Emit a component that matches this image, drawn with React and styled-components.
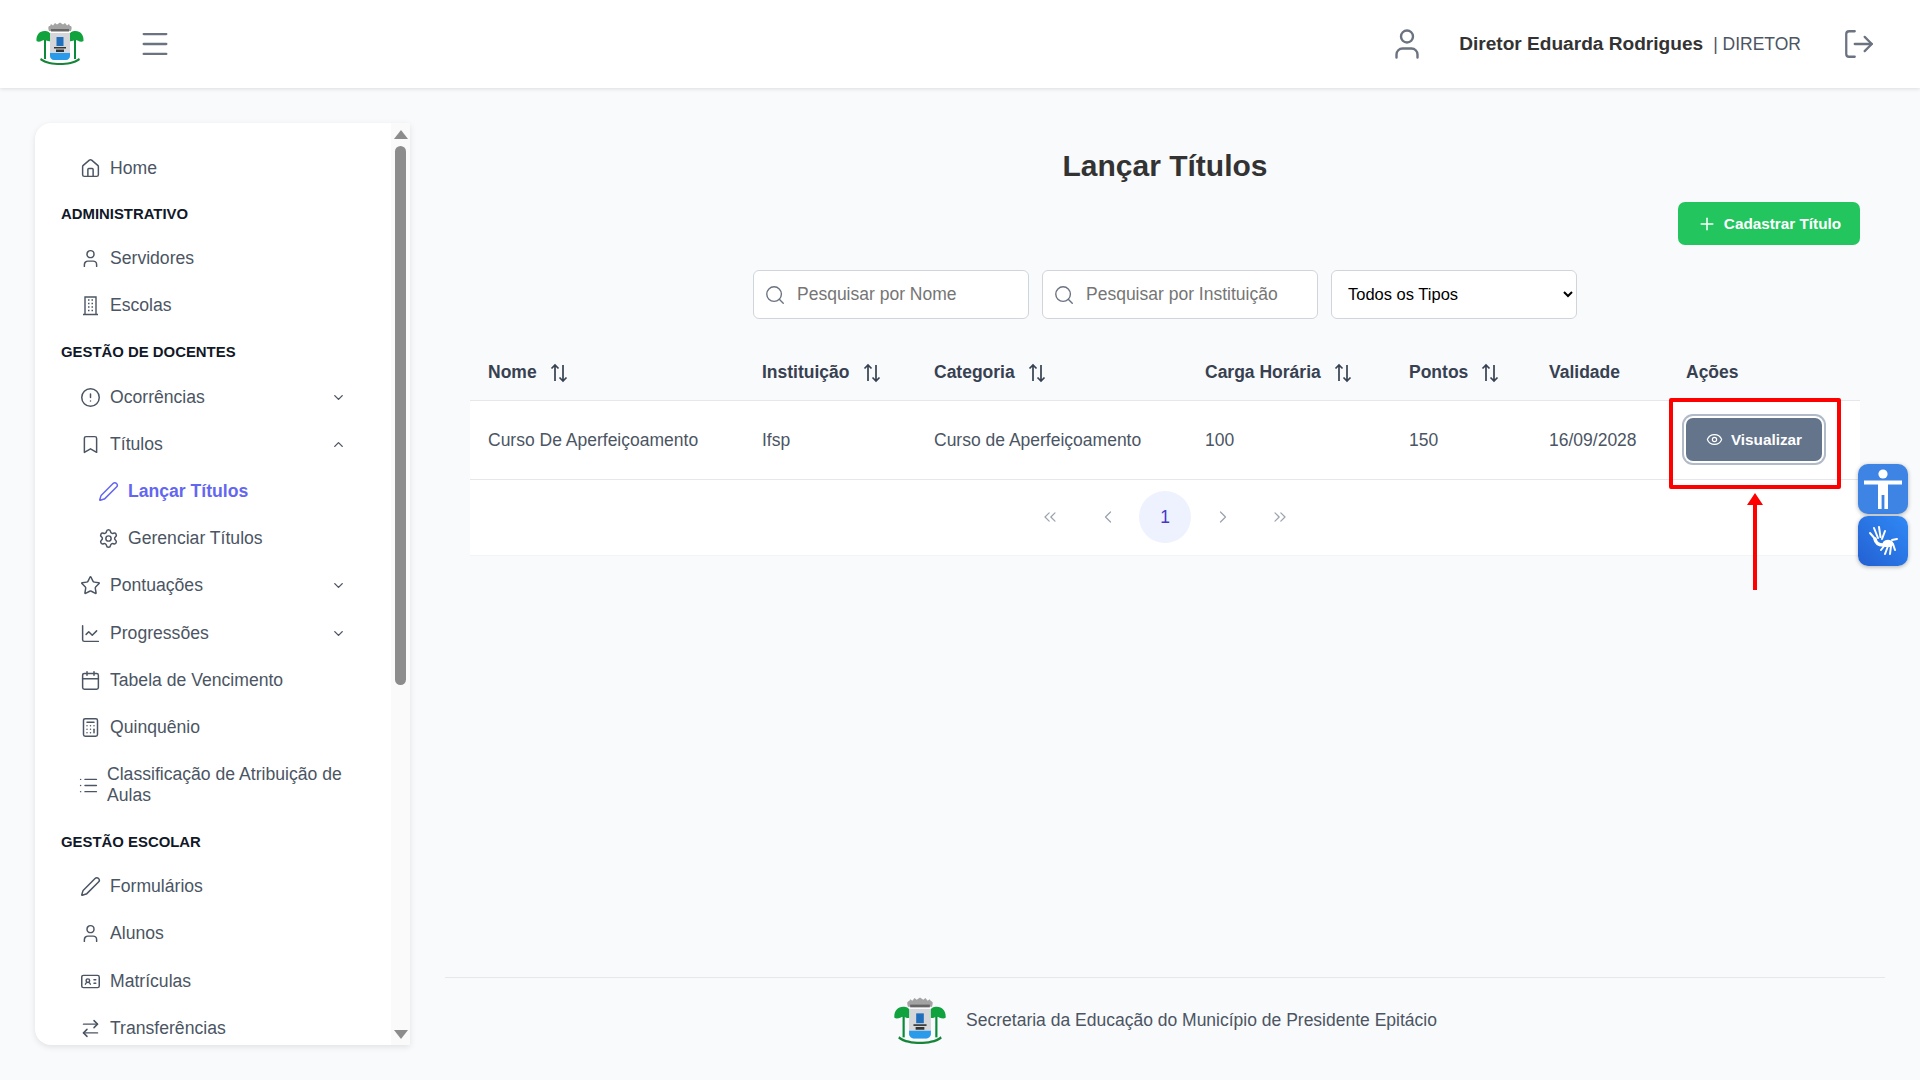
import React from 'react';
import styled, { createGlobalStyle } from 'styled-components';
import {
    House,
    User,
    CircleAlert,
    Bookmark,
    ChevronDown,
    ChevronUp,
    Pen,
    Settings,
    Star,
    ChartLine,
    Calendar,
    Calculator,
    List,
    IdCard,
    ArrowRightLeft,
    Menu,
    LogOut,
    Search,
    Plus,
    Eye,
    ChevronsLeft,
    ChevronsRight,
    ChevronLeft,
    ChevronRight,
} from 'lucide-react';

const GlobalStyle = createGlobalStyle`
    html, body {
        margin: 0;
        padding: 0;
        background: #f9fafb;
        font-family: "Liberation Sans", Arial, sans-serif;
    }
    * {
        box-sizing: border-box;
    }
`;

const Page = styled.div`
    position: relative;
    width: 1920px;
    height: 1080px;
    overflow: hidden;
    display: flex;
    flex-direction: column;
    background: #f9fafb;
`;

const Header = styled.header`
    height: 88px;
    flex: none;
    display: flex;
    align-items: center;
    background: #fff;
    box-shadow: 0 1px 4px rgba(0, 0, 0, 0.12);
    padding: 0 44px 0 36px;
    z-index: 2;
`;

const HamburgerBtn = styled.div`
    display: flex;
    margin-left: 54px;
    color: #6b7280;
`;

const HeaderRight = styled.div`
    margin-left: auto;
    display: flex;
    align-items: center;
    color: #6b7280;
`;

const UserName = styled.span`
    margin-left: 34px;
    font-size: 19.1px;
    font-weight: 700;
    color: #333;
`;

const UserRole = styled.span`
    margin-left: 10px;
    margin-right: 41px;
    font-size: 17.5px;
    color: #4b5563;
`;

const Body = styled.div`
    flex: 1;
    display: flex;
    min-height: 0;
`;

const Sidebar = styled.aside`
    flex: none;
    width: 375px;
    margin: 35px 0 35px 35px;
    display: flex;
    background: #fff;
    border-radius: 16px 0 0 16px;
    box-shadow: 0 2px 6px rgba(0, 0, 0, 0.1);
    overflow: hidden;
`;

const Nav = styled.nav`
    flex: 1;
    min-width: 0;
    overflow: hidden;
    padding-top: 22px;
`;

const ScrollTrack = styled.div`
    flex: none;
    width: 19px;
    display: flex;
    flex-direction: column;
    align-items: center;
    background: #fafafa;
    padding-top: 7px;
`;

const ScrollArrow = styled.div`
    width: 0;
    height: 0;
    border-left: 7px solid transparent;
    border-right: 7px solid transparent;
    ${props => (props.$down ? 'border-top: 9px solid #8c8c8c;' : 'border-bottom: 9px solid #8c8c8c;')}
    ${props => (props.$down ? 'margin-top: auto; margin-bottom: 6px;' : '')}
`;

const ScrollThumb = styled.div`
    width: 11px;
    height: 539px;
    margin-top: 7px;
    background: #8c8c8c;
    border-radius: 6px;
`;

const SectionTitle = styled.div`
    height: ${props => (props.$first ? '43px' : '44px')};
    display: flex;
    align-items: center;
    padding: ${props => (props.$first ? '0' : '1px')} 0 0 26px;
    font-size: 14.9px;
    font-weight: 700;
    color: #111827;
`;

const NavItem = styled.div`
    min-height: 47.2px;
    display: flex;
    align-items: center;
    gap: ${props => (props.$tight ? '8px' : '9px')};
    padding: 13px 45px 13px ${props => (props.$sub ? '63px' : props.$tight ? '43px' : '45px')};
    font-size: 17.6px;
    line-height: 21px;
    color: ${props => (props.$active ? '#6366f1' : '#4b5563')};
    font-weight: ${props => (props.$active ? 700 : 400)};
    svg {
        flex: none;
    }
`;

const NavLabel = styled.span`
    flex: 1;
`;

const Main = styled.main`
    flex: 1;
    min-width: 0;
    display: flex;
    flex-direction: column;
    padding: 60px 35px 0;
`;

const Content = styled.div`
    flex: 1;
    padding: 0 25px;
`;

const Title = styled.h1`
    margin: 0;
    height: 36px;
    line-height: 36px;
    text-align: center;
    font-size: 30px;
    font-weight: 700;
    color: #333;
`;

const TopActions = styled.div`
    display: flex;
    justify-content: flex-end;
    margin-top: 18px;
`;

const AddButton = styled.button`
    width: 182px;
    height: 43px;
    display: flex;
    align-items: center;
    justify-content: center;
    gap: 7px;
    border: 0;
    border-radius: 7px;
    background: #22c55e;
    color: #fff;
    font-family: inherit;
    font-size: 15.3px;
    font-weight: 700;
`;

const Filters = styled.div`
    display: flex;
    justify-content: center;
    gap: 13px;
    margin-top: 25px;
`;

const SearchBox = styled.label`
    width: 276px;
    height: 49px;
    display: flex;
    align-items: center;
    gap: 11px;
    padding: 0 10px;
    background: #fff;
    border: 1px solid #d1d5db;
    border-radius: 6px;
    color: #6b7280;
`;

const SearchInput = styled.input`
    flex: 1;
    min-width: 0;
    border: 0;
    outline: 0;
    padding: 0;
    background: transparent;
    font-family: inherit;
    font-size: 17.5px;
    color: #333;
    ::placeholder {
        color: #757575;
    }
`;

const TypeSelect = styled.select`
    width: 246px;
    height: 49px;
    padding: 0 12px 2px;
    background: #fff;
    border: 1px solid #d1d5db;
    border-radius: 6px;
    font-family: inherit;
    font-size: 16.5px;
    color: #000;
`;

const Table = styled.table`
    width: 100%;
    margin-top: 25px;
    table-layout: fixed;
    border-collapse: collapse;
`;

const Th = styled.th`
    width: ${props => props.$w}px;
    height: 56px;
    padding: 2px 18px 0;
    text-align: left;
    font-size: 17.5px;
    font-weight: 700;
    color: #374151;
    border-bottom: 1px solid #e5e7eb;
`;

const ThInner = styled.span`
    display: inline-flex;
    align-items: center;
    gap: 13px;
`;

const Td = styled.td`
    height: 79px;
    padding: 2px 18px 0;
    background: #fff;
    font-size: 17.5px;
    color: #4b5563;
    border-bottom: 1px solid #e5e7eb;
`;

const ViewButton = styled.button`
    width: 136px;
    height: 43px;
    margin-top: -2px;
    display: flex;
    align-items: center;
    justify-content: center;
    gap: 8px;
    border: 0;
    border-radius: 7px;
    background: #64748b;
    color: #fff;
    box-shadow: 0 0 0 2px #fff, 0 0 0 4px #b0bac8;
    font-family: inherit;
    font-size: 15.3px;
    font-weight: 700;
`;

const Pagination = styled.div`
    height: 76px;
    display: flex;
    align-items: center;
    justify-content: center;
    gap: 5.5px;
    background: #fff;
    border-bottom: 1px solid #f3f4f6;
`;

const PageButton = styled.div`
    width: 52px;
    height: 52px;
    display: flex;
    align-items: center;
    justify-content: center;
    border-radius: 50%;
    font-size: 17.5px;
    color: ${props => (props.$current ? '#4338ca' : '#9ca3af')};
    background: ${props => (props.$current ? '#eef2ff' : 'transparent')};
`;

const Footer = styled.footer`
    height: 103px;
    flex: none;
    display: flex;
    align-items: flex-start;
    justify-content: center;
    gap: 19px;
    padding-top: 19px;
    border-top: 1px solid #e5e7eb;
    font-size: 17.5px;
    color: #4b5563;
`;

const FooterText = styled.span`
    line-height: 46px;
`;

const Highlight = styled.div`
    position: absolute;
    left: 1669px;
    top: 398px;
    width: 172px;
    height: 91px;
    border: 4px solid #f00;
    border-radius: 2px;
`;

const ArrowMark = styled.svg`
    position: absolute;
    left: 1745px;
    top: 493px;
`;

const WidgetStack = styled.div`
    position: absolute;
    left: 1858px;
    top: 464px;
    display: flex;
    flex-direction: column;
    gap: 2px;
`;

const Widget = styled.div`
    width: 50px;
    height: 50px;
    display: flex;
    align-items: center;
    justify-content: center;
    border-radius: 10px;
    background: ${props => (props.$hands ? 'linear-gradient(225deg, #3089f6, #2360d2)' : '#3d84e4')};
    box-shadow: 0 1px 4px rgba(0, 0, 0, 0.3);
`;

const Crest = ({ w, h }) => (
    <svg width={w} height={h} viewBox="0 0 48 44">
        <rect x="8" y="15" width="2" height="22" fill="#0a8a3a" />
        <rect x="38" y="15" width="2" height="22" fill="#0a8a3a" />
        <path d="M0.5 19c-.5-6 3-10 8-10 3 0 6 1 6.5 5l-.5 5c-2 1-4-1-6-1s-5 3-8 1z" fill="#10a23c" />
        <path d="M47.5 19c.5-6-3-10-8-10-3 0-6 1-6.5 5l.5 5c2 1 4-1 6-1s5 3 8 1z" fill="#10a23c" />
        <path d="M13 9c-1-3-1-5 1-5l1-2 2 1.5 2-2.500 2 1.500 3-2 3 2 2-1.500 2 2.500 2-1.500 1 2c2 0 2 2 1 5z" fill="#a3a3a3" />
        <rect x="15" y="7" width="18" height="2.5" fill="#666" />
        <path d="M14 11h20v23c0 2-2 4-4 4H18c-2 0-4-2-4-4z" fill="#d4d6da" />
        <rect x="20.5" y="15" width="7" height="9" fill="#1f6fbd" />
        <rect x="18" y="25" width="12" height="1.5" fill="#333" />
        <rect x="20" y="27.5" width="8" height="2.5" fill="#333" />
        <path d="M14 31h20v3c0 2-2 4-4 4H18c-2 0-4-2-4-4z" fill="#2a9bea" />
        <path d="M5 36c5 4 12 5 19 5s14-1 19-5l1 2c-5 4-13 5-20 5S9 42 4 38z" fill="#16853a" />
    </svg>
);

const BuildingIcon = ({ size }) => (
    <svg width={size} height={size} viewBox="0 0 21 21" fill="none" stroke="currentColor" strokeWidth="1.4">
        <path d="M3 19.5h15M5 19.5V2h11v17.500" />
        <path
            d="M8 5h1.500M11.500 5H13M8 8.500h1.500M11.500 8.500H13M8 12h1.500M11.500 12H13M8 15.500h1.500M11.500 15.500H13"
            strokeWidth="1.6"
        />
    </svg>
);

const SortIcon = () => (
    <svg width="18" height="20" viewBox="0 0 18 20" fill="none" stroke="#374151" strokeWidth="1.7">
        <path d="M5 18V2M1.5 5.5 5 2l3.5 3.5" />
        <path d="M13 2v16M9.5 14.5 13 18l3.5-3.5" />
    </svg>
);

const BodyIcon = () => (
    <svg width="40" height="42" viewBox="0 0 40 42" fill="#fff">
        <circle cx="20" cy="6" r="4.6" />
        <path d="M1 12.5h38v4H25V41h-3.6V27h-2.8v14H15V16.5H1z" />
    </svg>
);

const HandsIcon = () => (
    <svg width="32" height="32" viewBox="0 0 32 32" fill="none" stroke="#fff" strokeLinecap="round">
        <g strokeWidth="2">
            <path d="M3 8l6 7M7 3l4 10M12 2l1.5 10M18 6l-3 8" />
            <path d="M8 14c1 5 4 6 8 6" strokeWidth="3.5" />
            <path d="M14 25l4-5M18 29l3-8M23 29l1-8M28 25l-2-6M30 14l-5 1" />
        </g>
        <path d="M16 17c3-3 7-3 10 0 1 2 0 4-2 5h-6c-2-1-3-3-2-5z" fill="#fff" stroke="none" />
    </svg>
);

const iconProps = { size: 21, strokeWidth: 1.7 };

const Item = ({ icon: Icon, label, chevron, sub, active, tight }) => (
    <NavItem $sub={sub} $active={active} $tight={tight}>
        <Icon {...iconProps} />
        <NavLabel>{label}</NavLabel>
        {chevron === 'down' && <ChevronDown size={15} strokeWidth={2.2} />}
        {chevron === 'up' && <ChevronUp size={15} strokeWidth={2.2} />}
    </NavItem>
);

const columns = [
    { label: 'Nome', w: 274, sort: true },
    { label: 'Instituição', w: 172, sort: true },
    { label: 'Categoria', w: 271, sort: true },
    { label: 'Carga Horária', w: 204, sort: true },
    { label: 'Pontos', w: 140, sort: true },
    { label: 'Validade', w: 137 },
    { label: 'Ações', w: 192 },
];

const App = () => {
    return (
        <Page>
            <GlobalStyle />
            <Header>
                <Crest w={48} h={44} />
                <HamburgerBtn>
                    <Menu size={34} strokeWidth={1.6} />
                </HamburgerBtn>
                <HeaderRight>
                    <User size={36} strokeWidth={1.6} />
                    <UserName>Diretor Eduarda Rodrigues</UserName>
                    <UserRole>| DIRETOR</UserRole>
                    <LogOut size={34} strokeWidth={1.6} />
                </HeaderRight>
            </Header>
            <Body>
                <Sidebar>
                    <Nav>
                        <Item icon={House} label="Home" />
                        <SectionTitle $first>ADMINISTRATIVO</SectionTitle>
                        <Item icon={User} label="Servidores" />
                        <Item icon={BuildingIcon} label="Escolas" />
                        <SectionTitle>GESTÃO DE DOCENTES</SectionTitle>
                        <Item icon={CircleAlert} label="Ocorrências" chevron="down" />
                        <Item icon={Bookmark} label="Títulos" chevron="up" />
                        <Item icon={Pen} label="Lançar Títulos" sub active />
                        <Item icon={Settings} label="Gerenciar Títulos" sub />
                        <Item icon={Star} label="Pontuações" chevron="down" />
                        <Item icon={ChartLine} label="Progressões" chevron="down" />
                        <Item icon={Calendar} label="Tabela de Vencimento" />
                        <Item icon={Calculator} label="Quinquênio" />
                        <Item icon={List} label="Classificação de Atribuição de Aulas" tight />
                        <SectionTitle>GESTÃO ESCOLAR</SectionTitle>
                        <Item icon={Pen} label="Formulários" />
                        <Item icon={User} label="Alunos" />
                        <Item icon={IdCard} label="Matrículas" />
                        <Item icon={ArrowRightLeft} label="Transferências" />
                    </Nav>
                    <ScrollTrack>
                        <ScrollArrow />
                        <ScrollThumb />
                        <ScrollArrow $down />
                    </ScrollTrack>
                </Sidebar>
                <Main>
                    <Content>
                        <Title>Lançar Títulos</Title>
                        <TopActions>
                            <AddButton>
                                <Plus size={20} strokeWidth={1.8} />
                                Cadastrar Título
                            </AddButton>
                        </TopActions>
                        <Filters>
                            <SearchBox>
                                <Search size={22} strokeWidth={1.5} />
                                <SearchInput placeholder="Pesquisar por Nome" />
                            </SearchBox>
                            <SearchBox>
                                <Search size={22} strokeWidth={1.5} />
                                <SearchInput placeholder="Pesquisar por Instituição" />
                            </SearchBox>
                            <TypeSelect defaultValue="todos">
                                <option value="todos">Todos os Tipos</option>
                            </TypeSelect>
                        </Filters>
                        <Table>
                            <thead>
                                <tr>
                                    {columns.map(col => (
                                        <Th key={col.label} $w={col.w}>
                                            <ThInner>
                                                {col.label}
                                                {col.sort && <SortIcon />}
                                            </ThInner>
                                        </Th>
                                    ))}
                                </tr>
                            </thead>
                            <tbody>
                                <tr>
                                    <Td>Curso De Aperfeiçoamento</Td>
                                    <Td>Ifsp</Td>
                                    <Td>Curso de Aperfeiçoamento</Td>
                                    <Td>100</Td>
                                    <Td>150</Td>
                                    <Td>16/09/2028</Td>
                                    <Td>
                                        <ViewButton>
                                            <Eye size={17} strokeWidth={1.7} />
                                            Visualizar
                                        </ViewButton>
                                    </Td>
                                </tr>
                            </tbody>
                        </Table>
                        <Pagination>
                            <PageButton><ChevronsLeft size={20} strokeWidth={1.5} /></PageButton>
                            <PageButton><ChevronLeft size={20} strokeWidth={1.5} /></PageButton>
                            <PageButton $current>1</PageButton>
                            <PageButton><ChevronRight size={20} strokeWidth={1.5} /></PageButton>
                            <PageButton><ChevronsRight size={20} strokeWidth={1.5} /></PageButton>
                        </Pagination>
                    </Content>
                    <Footer>
                        <Crest w={54} h={48} />
                        <FooterText>Secretaria da Educação do Município de Presidente Epitácio</FooterText>
                    </Footer>
                </Main>
            </Body>
            <Highlight />
            <ArrowMark width="20" height="97" viewBox="0 0 20 97">
                <path d="M10 0l8 12h-6v85H8V12H2z" fill="#f00" />
            </ArrowMark>
            <WidgetStack>
                <Widget><BodyIcon /></Widget>
                <Widget $hands><HandsIcon /></Widget>
            </WidgetStack>
        </Page>
    );
};

export default App;
